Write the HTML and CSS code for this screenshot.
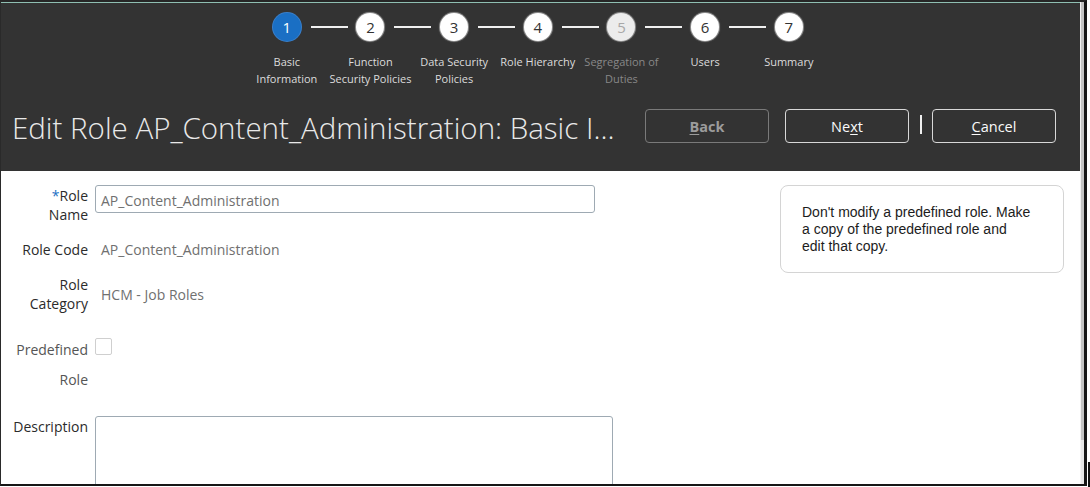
FILE: index.html
```html
<!DOCTYPE html>
<html>
<head>
<meta charset="utf-8">
<link rel="stylesheet" href="styles.css">
</head>
<body>
<div class="frame">
  <div class="main">
    <header class="header">
      <ol class="train">
        <li class="step current"><span class="dot">1</span><span class="step-label">Basic<br>Information</span></li>
        <li class="step"><span class="dot">2</span><span class="step-label">Function<br>Security Policies</span></li>
        <li class="step"><span class="dot">3</span><span class="step-label">Data Security<br>Policies</span></li>
        <li class="step"><span class="dot">4</span><span class="step-label">Role Hierarchy</span></li>
        <li class="step disabled"><span class="dot">5</span><span class="step-label">Segregation of<br>Duties</span></li>
        <li class="step"><span class="dot">6</span><span class="step-label">Users</span></li>
        <li class="step"><span class="dot">7</span><span class="step-label">Summary</span></li>
      </ol>
      <div class="titlebar">
        <h1 class="title">Edit Role AP_Content_Administration: Basic I...</h1>
        <div class="actions">
          <button class="btn btn-disabled"><u>B</u>ack</button>
          <button class="btn">Ne<u>x</u>t</button>
          <span class="sep"></span>
          <button class="btn"><u>C</u>ancel</button>
        </div>
      </div>
    </header>
    <section class="content">
      <div class="form">
        <div class="row row-name">
          <label class="lbl"><span class="req">*</span>Role<br>Name</label>
          <div class="text-input">AP_Content_Administration</div>
        </div>
        <div class="row row-code">
          <span class="lbl">Role Code</span>
          <span class="val">AP_Content_Administration</span>
        </div>
        <div class="row row-cat">
          <span class="lbl">Role<br>Category</span>
          <span class="val">HCM - Job Roles</span>
        </div>
        <div class="row row-pre">
          <span class="lbl lbl-muted">Predefined<br>Role</span>
          <span class="checkbox"></span>
        </div>
        <div class="row row-desc">
          <span class="lbl">Description</span>
          <div class="textarea"></div>
        </div>
      </div>
      <aside class="note">Don't modify a predefined role. Make a copy of the predefined role and edit that copy.</aside>
    </section>
  </div>
  <div class="scrollbar"><div class="thumb"></div></div>
</div>
<div class="edge"></div>
</body>
</html>
```
FILE: styles.css
```css
* { box-sizing: border-box; }
html, body { margin: 0; padding: 0; background: #fff; }
body { width: 1090px; height: 487px; overflow: hidden; position: relative; font-family: "Open Sans", "Noto Sans", sans-serif; }

.frame {
  width: 1087px;
  height: 486px;
  display: flex;
  border-top: 2px solid #262626;
  border-left: 1px solid #2a2a2a;
  border-right: 3px solid #161616;
  border-bottom: 2px solid #161616;
  overflow: hidden;
}
.main { flex: 1; display: flex; flex-direction: column; overflow: hidden; }
.scrollbar { width: 4px; background: #e6e6e6; border-left: 1px solid #f2f2f2; }
.thumb { height: 438px; background: #c4c4c4; }
.edge { position: absolute; left: 1088px; top: 462px; width: 2px; height: 25px; background: #111; }

.header {
  background: #333333;
  border-top: 1px solid #8fbfb2;
  height: 169px;
  flex: none;
}
.train {
  list-style: none;
  margin: 0;
  padding: 10px 0 0 244px;
  display: flex;
}
.step {
  width: 83.67px;
  display: flex;
  flex-direction: column;
  align-items: center;
  position: relative;
}
.step:not(:last-child)::after {
  content: "";
  position: absolute;
  top: 13px;
  left: calc(50% + 24px);
  width: 37px;
  height: 2px;
  background: #f0f0f0;
}
.dot {
  width: 28px;
  height: 28px;
  border-radius: 50%;
  background: #fff;
  color: #333;
  font-size: 15px;
  display: flex;
  align-items: center;
  justify-content: center;
  box-shadow: 0 0 0 1px #8a8a8a, 0 0 2px 1px #555;
}
.current .dot { background: #1a6fc4; color: #fff; box-shadow: 0 0 0 1px #3a7fc9; }
.disabled .dot { background: #ececec; color: #a8a8a8; }
.step-label {
  margin-top: 12px;
  font-size: 11px;
  line-height: 17px;
  color: #dcdcdc;
  text-align: center;
  white-space: nowrap;
}
.disabled .step-label { color: #888; }

.titlebar {
  display: flex;
  align-items: center;
  height: 52px;
  margin-top: 13px;
  padding-left: 11px;
}
.title {
  margin: 0;
  font-weight: 300;
  font-size: 29.5px;
  color: #e9e9e9;
  letter-spacing: 0;
  white-space: nowrap;
  width: 633px;
  padding-top: 2px;
}
.actions { display: flex; align-items: center; }
.btn {
  width: 124px;
  height: 34px;
  background: transparent;
  border: 1px solid #d8d8d8;
  border-radius: 4px;
  color: #fafafa;
  font-family: "Open Sans", "Noto Sans", sans-serif;
  font-size: 14.5px;
  padding: 0;
  margin-right: 16px;
}
.btn u { text-underline-offset: 2px; }
.btn-disabled { border-color: #7a7a7a; color: #9c9c9c; font-weight: 700; }
.sep { width: 2px; height: 19px; background: #f0f0f0; margin: 0 10px 4px -5px; }

.content {
  flex: 1;
  display: flex;
  padding-top: 14px;
  color: #333;
}
.form { width: 779px; }
.row { display: flex; }
.lbl {
  width: 87px;
  flex: none;
  text-align: right;
  font-size: 14px;
  line-height: 19px;
  color: #2b2b2b;
  margin-right: 7px;
}
.req { color: #1a6fc4; }
.lbl-muted { color: #555; line-height: 30px; }
.val { font-size: 14px; color: #707070; padding-left: 6px; line-height: 19px; }
.text-input {
  width: 500px;
  height: 28px;
  border: 1px solid #9eaab3;
  border-radius: 3px;
  padding: 2px 0 0 5px;
  font-size: 14px;
  line-height: 26px;
  color: #707070;
}
.row-name .lbl { padding-top: 1px; }
.row-code { margin-top: 16px; }
.row-cat { margin-top: 16px; align-items: center; }
.row-pre { margin-top: 22px; }
.checkbox {
  width: 17px;
  height: 17px;
  border: 1px solid #cfcfcf;
  border-radius: 2px;
  margin-top: 3px;
}
.row-desc { margin-top: 21px; }
.row-desc .lbl { padding-top: 1px; }
.textarea {
  width: 518px;
  height: 90px;
  border: 1px solid #9eaab3;
  border-radius: 3px;
}

.note {
  width: 284px;
  height: 88px;
  border: 1px solid #d4d4d4;
  border-radius: 8px;
  padding: 18px 30px 0 21px;
  font-family: "Liberation Sans", Arial, sans-serif;
  font-size: 14px;
  line-height: 17px;
  color: #1c1c1c;
}
```
